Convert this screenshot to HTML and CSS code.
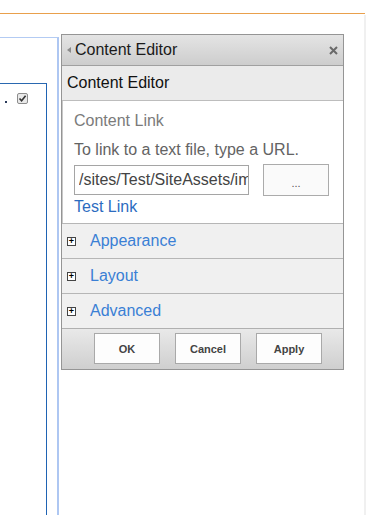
FILE: index.html
```html
<!DOCTYPE html>
<html lang="en">
<head>
    <meta charset="UTF-8">
    <meta name="viewport" content="width=device-width, initial-scale=1.0">
    <title>Content Editor</title>
    <link rel="stylesheet" href="styles.css">
</head>
<body>
    <div class="topbar"></div>
    <div class="workspace">
        <div class="page">
            <div class="zone">
                <div class="webpart">
                    <div class="wp-row">
                        <span class="mark"></span>
                        <svg class="check" width="11" height="11" viewBox="0 0 11 11">
                            <rect x="0.5" y="0.5" width="10" height="10" rx="1.5" fill="#e9e9e9" stroke="#8d8d8d"/>
                            <path d="M2.5 5.5 L4.6 7.8 L8.6 2.8" fill="none" stroke="#333" stroke-width="1.6"/>
                        </svg>
                    </div>
                </div>
            </div>

            <div class="toolpane">
                <div class="tp-header">
                    <span class="arrow"></span>
                    <span class="tp-title">Content Editor</span>
                    <svg class="close" width="9" height="9" viewBox="0 0 9 9">
                        <path d="M1 1 L8 8 M8 1 L1 8" stroke="#6a6a6a" stroke-width="2"/>
                    </svg>
                </div>
                <div class="tp-band">Content Editor</div>
                <div class="tp-body">
                    <div class="field-label">Content Link</div>
                    <div class="field-help">To link to a text file, type a URL.</div>
                    <div class="field-row">
                        <input class="url-input" type="text" value="/sites/Test/SiteAssets/images.html" readonly>
                        <button class="browse-btn" type="button">...</button>
                    </div>
                    <a class="test-link" href="#">Test Link</a>
                </div>
                <div class="section">
                    <span class="plus">+</span>
                    <span class="section-title">Appearance</span>
                </div>
                <div class="section">
                    <span class="plus">+</span>
                    <span class="section-title">Layout</span>
                </div>
                <div class="section">
                    <span class="plus">+</span>
                    <span class="section-title">Advanced</span>
                </div>
                <div class="tp-footer">
                    <button class="btn">OK</button>
                    <button class="btn">Cancel</button>
                    <button class="btn">Apply</button>
                </div>
            </div>
        </div>
        <div class="scrollbar"></div>
    </div>
</body>
</html>
```

FILE: styles.css
```css
body {
    margin: 0;
    padding: 0;
    background: #fff;
    font-family: "Liberation Sans", Arial, sans-serif;
    overflow: hidden;
}
.topbar {
    width: 365px;
    height: 13px;
    border-bottom: 1px solid #e9a04c;
}
.workspace {
    display: flex;
    height: 501px;
}
.page {
    width: 364px;
    display: flex;
    align-items: flex-start;
}
.scrollbar {
    flex: 1;
    margin-top: 1px;
    background: #f0f0f0;
}
.zone {
    width: 57px;
    height: 477px;
    margin-top: 23px;
    border-top: 1px solid #b3cbf3;
    border-right: 2px solid #aec7f2;
}
.webpart {
    width: 46px;
    height: 431px;
    margin-top: 45px;
    border-top: 1px solid #2a68b0;
    border-right: 1px solid #1f63b3;
}
.wp-row {
    display: flex;
    align-items: center;
    padding-top: 9px;
}
.mark {
    width: 2px;
    height: 2px;
    margin-left: 5px;
    margin-top: 7px;
    background: #2a3a5a;
}
.check {
    margin-left: 10px;
}
.toolpane {
    width: 281px;
    margin-top: 20px;
    margin-left: 2px;
    border: 1px solid #959595;
    background: #fff;
}
.tp-header {
    height: 30px;
    display: flex;
    align-items: center;
    padding: 0 5px;
    background: linear-gradient(#e4e4e4, #cdcdcd);
    border-bottom: 1px solid #a0a0a0;
}
.arrow {
    width: 0;
    height: 0;
    border-top: 3.5px solid transparent;
    border-bottom: 3.5px solid transparent;
    border-right: 4px solid #8a8a8a;
    margin-right: 4px;
}
.tp-title {
    flex: 1;
    font-size: 16px;
    color: #1a1a1a;
}
.tp-band {
    height: 34px;
    line-height: 34px;
    padding-left: 5px;
    font-size: 16px;
    color: #111;
    background: #ebebeb;
    border-bottom: 1px solid #bdbdbd;
}
.tp-body {
    padding: 11px 0 7px 11px;
    border-left: 1px solid #c8c8c8;
}
.field-label {
    font-size: 16px;
    line-height: 18px;
    color: #7b7b7b;
}
.field-help {
    margin-top: 11px;
    font-size: 16px;
    line-height: 18px;
    color: #636363;
}
.field-row {
    display: flex;
    align-items: flex-start;
    gap: 14px;
    margin-top: 6px;
}
.url-input {
    box-sizing: border-box;
    width: 175px;
    height: 30px;
    margin: 0;
    padding: 0 0 0 4px;
    border: 1px solid #a5a5a5;
    border-radius: 0;
    font-family: "Liberation Sans", Arial, sans-serif;
    font-size: 16px;
    color: #444;
    background: #fff;
    outline: none;
}
.browse-btn {
    box-sizing: border-box;
    width: 66px;
    height: 32px;
    margin-top: -1px;
    padding: 6px 0 0;
    border: 1px solid #ababab;
    border-radius: 0;
    background: #fafafa;
    font-family: "Liberation Sans", Arial, sans-serif;
    font-size: 11px;
    color: #555;
}
.test-link {
    display: block;
    margin-top: 2px;
    font-size: 16px;
    line-height: 18px;
    color: #2c6cbf;
    text-decoration: none;
}
.section {
    height: 34px;
    display: flex;
    align-items: center;
    border-top: 1px solid #b6b6b6;
    background: #f0f0f0;
}
.plus {
    width: 7px;
    height: 7px;
    margin-left: 5px;
    margin-right: 14px;
    border: 1px solid #444;
    background: #fff;
    font-size: 9px;
    line-height: 6px;
    text-align: center;
    font-weight: bold;
    color: #000;
}
.section-title {
    font-size: 16px;
    color: #3a7fd5;
}
.tp-footer {
    height: 40px;
    display: flex;
    align-items: flex-start;
    gap: 15px;
    padding-left: 32px;
    border-top: 1px solid #b0b0b0;
    background: linear-gradient(#e9e9e9, #cfcfcf);
}
.btn {
    width: 66px;
    height: 31px;
    margin-top: 4px;
    border: 1px solid #a9a9a9;
    border-radius: 0;
    background: #fdfdfd;
    font-family: "Liberation Sans", Arial, sans-serif;
    font-size: 11px;
    font-weight: bold;
    color: #444;
    padding: 0;
}
```
